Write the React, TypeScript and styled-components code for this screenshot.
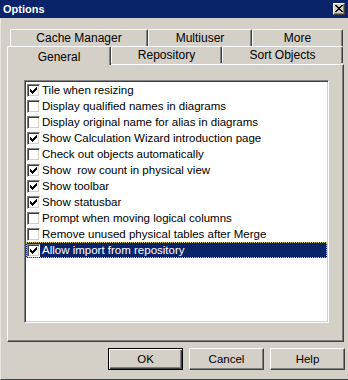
import React from 'react'
import styled, { createGlobalStyle } from 'styled-components'

const GlobalStyle = createGlobalStyle`
  html, body {
    margin: 0;
    padding: 0;
    background: #d4d0c8;
  }
  body {
    font-family: 'Liberation Sans', Arial, sans-serif;
    font-size: 11px;
    color: #000;
  }
`

const rowOne = [
    { label: 'Cache Manager', width: 138 },
    { label: 'Multiuser', width: 104 },
    { label: 'More', width: 91 },
]

const rowTwo = [
    { label: 'General', width: 104 },
    { label: 'Repository', width: 111 },
    { label: 'Sort Objects', width: 121 },
]

const options = [
    { label: 'Tile when resizing', checked: true },
    { label: 'Display qualified names in diagrams', checked: false },
    { label: 'Display original name for alias in diagrams', checked: false },
    { label: 'Show Calculation Wizard introduction page', checked: true },
    { label: 'Check out objects automatically', checked: false },
    { label: 'Show  row count in physical view', checked: true },
    { label: 'Show toolbar', checked: true },
    { label: 'Show statusbar', checked: true },
    { label: 'Prompt when moving logical columns', checked: false },
    { label: 'Remove unused physical tables after Merge', checked: false },
    { label: 'Allow import from repository', checked: true, selected: true },
]

const CheckMark = () => (
    <svg width="7" height="7" viewBox="0 0 7 7">
        <path d="M0 2h1v1h1v1h1V3h1V2h1V1h1V0h1v3H6v1H5v1H4v1H3v1H2V6H1V5H0z" fill="#000" />
    </svg>
)

const App = () => {
    return (
        <>
            <GlobalStyle />
            <Window>
                <TitleBar>
                    <span className="title">Options</span>
                    <CloseButton>
                        <svg width="8" height="7" viewBox="0 0 8 7">
                            <path
                                d="M0 0h2v1h1v1h2V1h1V0h2v1H7v1H6v1H5v1h1v1h1v1h1v1H6V6H5V5H3v1H2v1H0V6h1V5h1V4h1V3H2V2H1V1H0z"
                                fill="#000"
                            />
                        </svg>
                    </CloseButton>
                </TitleBar>
                <Body>
                    <TabRow $indent={3}>
                        {rowOne.map((t) => (
                            <Tab key={t.label} $w={t.width}>
                                {t.label}
                            </Tab>
                        ))}
                    </TabRow>
                    <TabRow $indent={0}>
                        {rowTwo.map((t, i) => (
                            <Tab key={t.label} $w={t.width} $active={i === 0}>
                                {t.label}
                            </Tab>
                        ))}
                    </TabRow>
                    <Panel>
                        <ListBox>
                            {options.map((o) => (
                                <Item key={o.label} $selected={!!o.selected}>
                                    <CheckBox>{o.checked && <CheckMark />}</CheckBox>
                                    <ItemLabel $selected={!!o.selected}>{o.label}</ItemLabel>
                                </Item>
                            ))}
                        </ListBox>
                    </Panel>
                    <ButtonRow>
                        <Button $default>OK</Button>
                        <Button>Cancel</Button>
                        <Button>Help</Button>
                    </ButtonRow>
                </Body>
            </Window>
        </>
    )
}

export default App

const Window = styled.div`
    width: 348px;
    height: 380px;
    box-sizing: border-box;
    background: #d4d0c8;
    border-left: 1px solid #e8e6e1;
    border-bottom: 1px solid #404040;
    display: flex;
    flex-direction: column;
`

const TitleBar = styled.div`
    height: 18px;
    margin-left: -1px;
    background: #0a246a;
    display: flex;
    align-items: center;
    justify-content: space-between;
    padding: 0 3px 0 3px;

    .title {
        color: #fff;
        font-weight: bold;
        font-size: 11px;
    }
`

const CloseButton = styled.div`
    width: 12px;
    height: 12px;
    box-sizing: border-box;
    background: #d4d0c8;
    border-top: 1px solid #fff;
    border-left: 1px solid #fff;
    border-right: 1px solid #404040;
    border-bottom: 1px solid #404040;
    box-shadow: inset -1px -1px 0 #808080;
    display: flex;
    align-items: center;
    justify-content: center;
    padding-bottom: 1px;
`

const Body = styled.div`
    display: flex;
    flex-direction: column;
    padding: 11px 4px 0 6px;
`

const TabRow = styled.div<{ $indent: number }>`
    display: flex;
    padding-left: ${(p) => p.$indent}px;
    position: relative;
    z-index: 1;
`

const Tab = styled.div<{ $w: number; $active?: boolean }>`
    width: ${(p) => p.$w}px;
    height: ${(p) => (p.$active ? 19 : 17)}px;
    box-sizing: border-box;
    background: #d4d0c8;
    border-top: 1px solid #fff;
    border-left: 1px solid #fff;
    border-right: 1px solid #404040;
    border-radius: 2px 2px 0 0;
    box-shadow: inset -1px 0 0 #808080;
    display: flex;
    align-items: center;
    justify-content: center;
    padding-top: ${(p) => (p.$active ? 2 : 0)}px;
    margin-bottom: ${(p) => (p.$active ? -1 : 0)}px;
    font-size: 12px;
    white-space: nowrap;
`

const Panel = styled.div`
    height: 278px;
    box-sizing: border-box;
    border-top: 1px solid #fff;
    border-left: 1px solid #fff;
    border-right: 1px solid #404040;
    border-bottom: 1px solid #404040;
    box-shadow: inset -1px -1px 0 #808080;
    padding: 15px 14px 0 16px;
`

const ListBox = styled.div`
    height: 243px;
    box-sizing: border-box;
    background: #fff;
    border-top: 1px solid #808080;
    border-left: 1px solid #808080;
    border-right: 1px solid #fff;
    border-bottom: 1px solid #fff;
    box-shadow: inset 1px 1px 0 #404040, inset -1px -1px 0 #d4d0c8;
    padding: 1px 1px 0 1px;
    display: flex;
    flex-direction: column;
`

const Item = styled.div<{ $selected: boolean }>`
    height: 16px;
    display: flex;
    align-items: center;
    box-sizing: border-box;
    padding-left: 1px;
    background: ${(p) => (p.$selected ? '#0a246a' : 'transparent')};
    outline: ${(p) => (p.$selected ? '1px dotted #e0d060' : 'none')};
    outline-offset: -1px;
`

const CheckBox = styled.div`
    width: 13px;
    height: 13px;
    flex: none;
    box-sizing: border-box;
    background: #fff;
    border-top: 1px solid #808080;
    border-left: 1px solid #808080;
    border-right: 1px solid #fff;
    border-bottom: 1px solid #fff;
    box-shadow: inset 1px 1px 0 #404040, inset -1px -1px 0 #d4d0c8;
    display: flex;
    align-items: center;
    justify-content: center;
`

const ItemLabel = styled.span<{ $selected: boolean }>`
    margin-left: 2px;
    font-size: 11.5px;
    white-space: pre;
    color: ${(p) => (p.$selected ? '#fff' : '#000')};
`

const ButtonRow = styled.div`
    display: flex;
    justify-content: flex-end;
    gap: 6px;
    margin-top: 6px;
    margin-right: -1px;
`

const Button = styled.div<{ $default?: boolean }>`
    width: 75px;
    height: 22px;
    box-sizing: border-box;
    background: #d4d0c8;
    border-top: 1px solid ${(p) => (p.$default ? '#000' : '#fff')};
    border-left: 1px solid ${(p) => (p.$default ? '#000' : '#fff')};
    border-right: 1px solid ${(p) => (p.$default ? '#000' : '#404040')};
    border-bottom: 1px solid ${(p) => (p.$default ? '#000' : '#404040')};
    box-shadow: ${(p) =>
        p.$default
            ? 'inset 1px 1px 0 #fff, inset -1px -1px 0 #404040, inset -2px -2px 0 #808080'
            : 'inset -1px -1px 0 #808080'};
    display: flex;
    align-items: center;
    justify-content: center;
    font-size: 11.5px;
`
